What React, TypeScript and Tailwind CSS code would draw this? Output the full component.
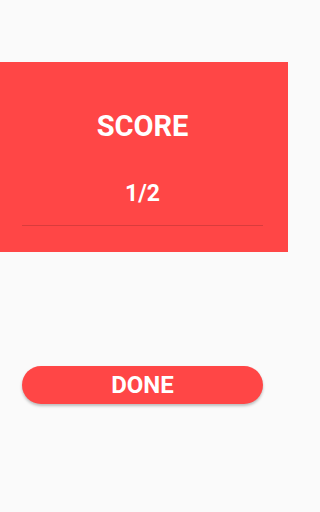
export default function App() {
  return (
    <div className="min-h-[512px] w-full bg-[#fafafa]">
      <div
        className="flex h-[512px] w-[288px] flex-col"
        style={{ fontFamily: "Roboto, 'Liberation Sans', sans-serif" }}
      >
        <div className="mt-[62px] flex h-[190px] flex-col items-center bg-[#ff4646] pl-[22px] pr-[25px] pt-[50px]">
          <h1 className="text-[29px] font-bold leading-[28px] text-white">SCORE</h1>
          <p className="mt-[42px] text-[23px] font-bold leading-[23px] text-white">1/2</p>
          <div className="mt-[20px] h-px w-full bg-[#d93c3c]" />
        </div>
        <div className="mt-[114px] pl-[22px] pr-[25px]">
          <button className="flex h-[38px] w-full items-center justify-center rounded-full bg-[#ff4646] text-[24px] font-bold text-white shadow-[0_2px_3px_rgba(0,0,0,0.25)]">
            DONE
          </button>
        </div>
      </div>
    </div>
  );
}
